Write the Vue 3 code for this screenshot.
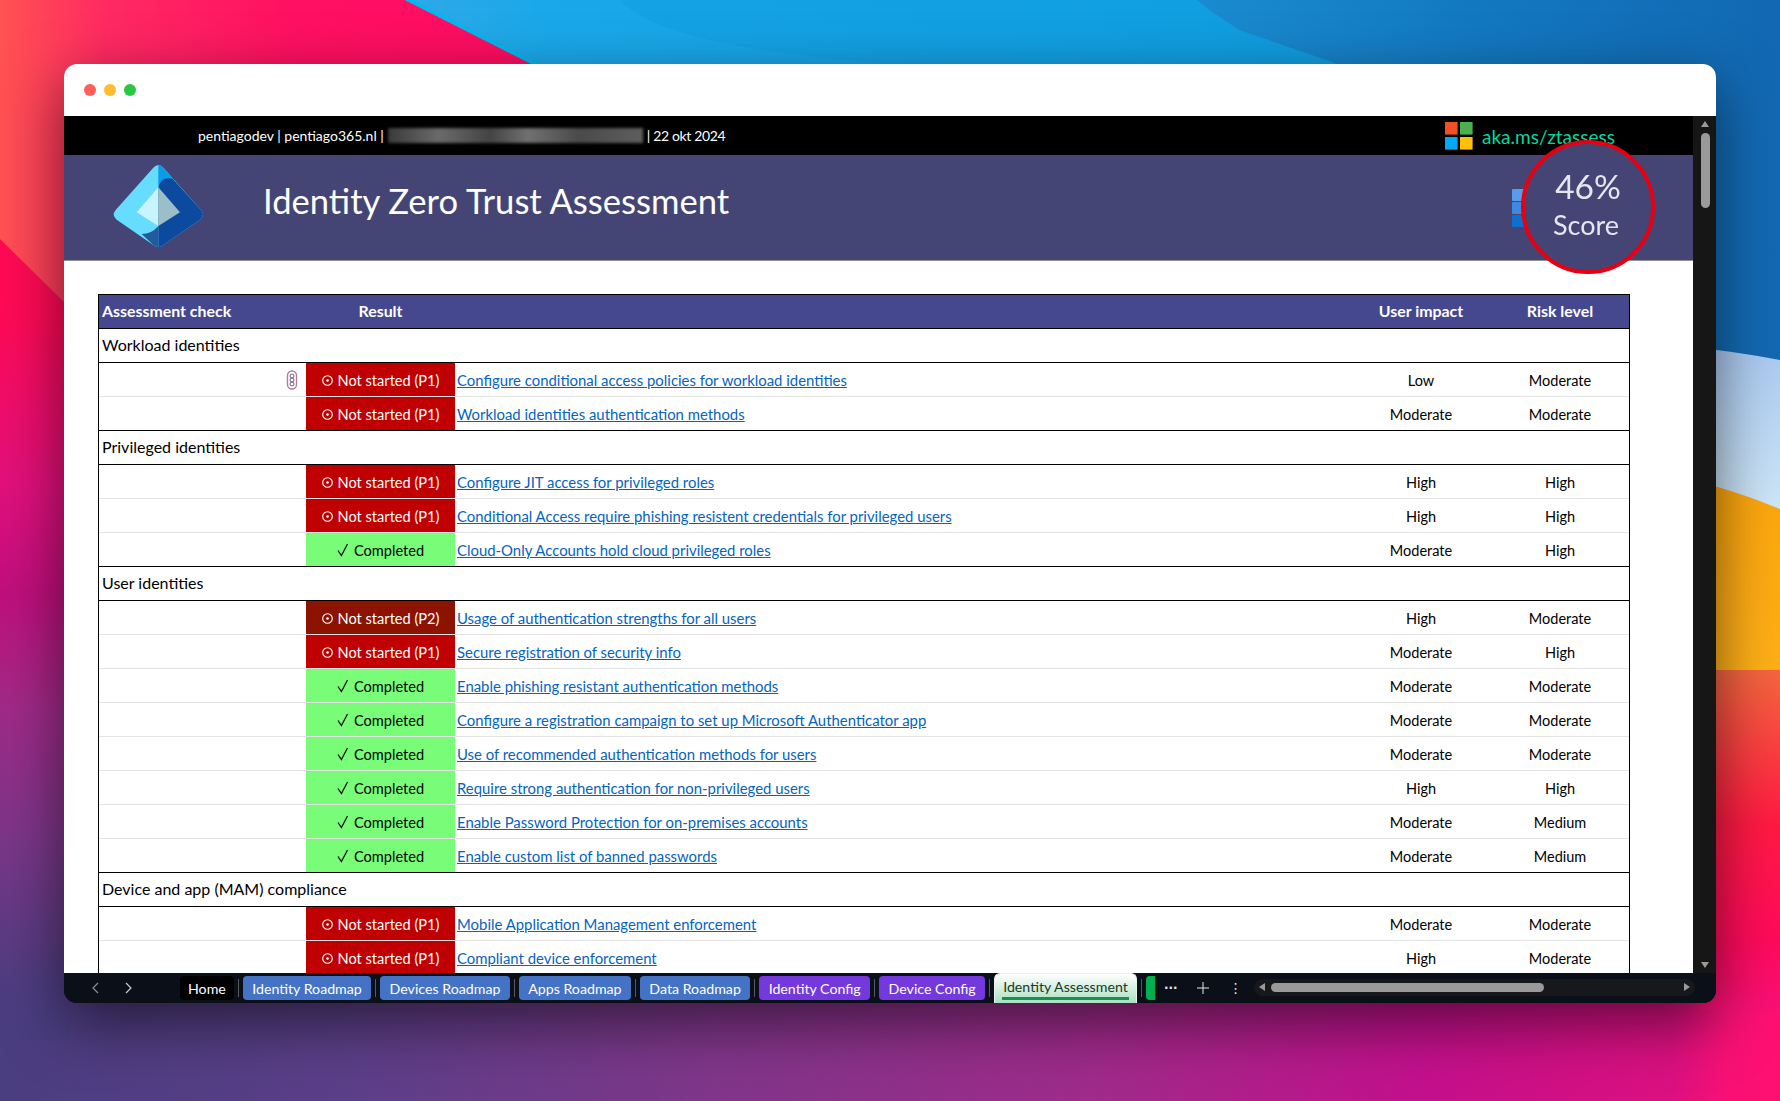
<script setup>
const P1 = { label: 'Not started (P1)', cls: 'p1' }
const P2 = { label: 'Not started (P2)', cls: 'p2' }
const OK = { label: 'Completed', cls: 'ok' }

const sections = [
  {
    name: 'Workload identities',
    rows: [
      { s: P1, link: 'Configure conditional access policies for workload identities', impact: 'Low', risk: 'Moderate', note: true },
      { s: P1, link: 'Workload identities authentication methods', impact: 'Moderate', risk: 'Moderate' },
    ],
  },
  {
    name: 'Privileged identities',
    rows: [
      { s: P1, link: 'Configure JIT access for privileged roles', impact: 'High', risk: 'High' },
      { s: P1, link: 'Conditional Access require phishing resistent credentials for privileged users', impact: 'High', risk: 'High' },
      { s: OK, link: 'Cloud-Only Accounts hold cloud privileged roles', impact: 'Moderate', risk: 'High' },
    ],
  },
  {
    name: 'User identities',
    rows: [
      { s: P2, link: 'Usage of authentication strengths for all users', impact: 'High', risk: 'Moderate' },
      { s: P1, link: 'Secure registration of security info', impact: 'Moderate', risk: 'High' },
      { s: OK, link: 'Enable phishing resistant authentication methods', impact: 'Moderate', risk: 'Moderate' },
      { s: OK, link: 'Configure a registration campaign to set up Microsoft Authenticator app', impact: 'Moderate', risk: 'Moderate' },
      { s: OK, link: 'Use of recommended authentication methods for users', impact: 'Moderate', risk: 'Moderate' },
      { s: OK, link: 'Require strong authentication for non-privileged users', impact: 'High', risk: 'High' },
      { s: OK, link: 'Enable Password Protection for on-premises accounts', impact: 'Moderate', risk: 'Medium' },
      { s: OK, link: 'Enable custom list of banned passwords', impact: 'Moderate', risk: 'Medium' },
    ],
  },
  {
    name: 'Device and app (MAM) compliance',
    rows: [
      { s: P1, link: 'Mobile Application Management enforcement', impact: 'Moderate', risk: 'Moderate' },
      { s: P1, link: 'Compliant device enforcement', impact: 'High', risk: 'Moderate' },
    ],
  },
]

const tabs = [
  { label: 'Home', cls: 'home' },
  { label: 'Identity Roadmap', cls: 'blue' },
  { label: 'Devices Roadmap', cls: 'blue' },
  { label: 'Apps Roadmap', cls: 'blue' },
  { label: 'Data Roadmap', cls: 'blue' },
  { label: 'Identity Config', cls: 'violet' },
  { label: 'Device Config', cls: 'violet' },
  { label: 'Identity Assessment', cls: 'active' },
]
</script>

<template>
  <div class="desktop">
    <svg class="wallpaper" width="1780" height="1101" viewBox="0 0 1780 1101">
      <defs>
        <linearGradient id="wpBottom" x1="0" x2="1" y1="0" y2="0">
          <stop offset="0" stop-color="#4a3d80" />
          <stop offset="0.2" stop-color="#5c3f88" />
          <stop offset="0.4" stop-color="#80368a" />
          <stop offset="0.62" stop-color="#a02a8a" />
          <stop offset="0.8" stop-color="#c4108c" />
          <stop offset="0.94" stop-color="#dc1080" />
          <stop offset="0.97" stop-color="#f81075" />
          <stop offset="1" stop-color="#ff1070" />
        </linearGradient>
        <linearGradient id="wpLeft" x1="0" x2="0" y1="0" y2="1">
          <stop offset="0" stop-color="#ff0a50" />
          <stop offset="0.3" stop-color="#ff0a55" />
          <stop offset="0.47" stop-color="#e0107c" />
          <stop offset="0.57" stop-color="#c00f7c" />
          <stop offset="0.68" stop-color="#a02a88" />
          <stop offset="0.81" stop-color="#7a3688" />
          <stop offset="0.95" stop-color="#4d3d80" />
          <stop offset="1" stop-color="#4a3d80" />
        </linearGradient>
        <linearGradient id="wpPink" gradientUnits="userSpaceOnUse" x1="0" x2="530" y1="0" y2="0">
          <stop offset="0" stop-color="#ff5252" />
          <stop offset="0.2" stop-color="#ff2a62" />
          <stop offset="0.55" stop-color="#ff1062" />
          <stop offset="1" stop-color="#ff0c60" />
        </linearGradient>
        <linearGradient id="wpBlue" x1="0" x2="1" y1="0" y2="0">
          <stop offset="0" stop-color="#30a8e8" />
          <stop offset="0.1" stop-color="#1aa8ea" />
          <stop offset="0.55" stop-color="#12a2e2" />
          <stop offset="1" stop-color="#0f90d6" />
        </linearGradient>
        <linearGradient id="wpDeep" gradientUnits="userSpaceOnUse" x1="1197" x2="1780" y1="0" y2="0">
          <stop offset="0" stop-color="#1a8bd0" />
          <stop offset="0.5" stop-color="#1278c0" />
          <stop offset="1" stop-color="#1268b2" />
        </linearGradient>
        <linearGradient id="wpSky" x1="0" x2="0" y1="0" y2="1">
          <stop offset="0" stop-color="#a8c8f0" />
          <stop offset="1" stop-color="#d0e8f8" />
        </linearGradient>
        <linearGradient id="wpOrange" x1="0" x2="0" y1="0" y2="1">
          <stop offset="0" stop-color="#fca40c" />
          <stop offset="1" stop-color="#ffb018" />
        </linearGradient>
        <linearGradient id="wpRed" x1="0" x2="0" y1="0" y2="1">
          <stop offset="0" stop-color="#f4663e" />
          <stop offset="0.45" stop-color="#ff1a42" />
          <stop offset="0.8" stop-color="#ff0a5c" />
          <stop offset="1" stop-color="#f81075" />
        </linearGradient>
      </defs>
      <rect width="1780" height="1101" fill="url(#wpBottom)" />
      <rect width="70" height="1040" fill="url(#wpLeft)" />
      <rect x="405" width="1375" height="360" fill="url(#wpBlue)" />
      <path d="M619 0 C650 30 720 50 886 64 L1335 64 L1197 0 Z" fill="#0f9cdf" opacity="0.35" />
      <path d="M1197 0 C1210 12 1225 20 1239 30 L1335 63 L1500 360 L1780 360 L1780 0 Z" fill="url(#wpDeep)" />
      <path d="M405 0 L0 0 L0 239 L64 302 L1000 302 Z" fill="url(#wpPink)" />
      <path d="M405 0 L413 0 L538 63 L530 63 Z" fill="#00b8f0" />
      <path d="M1500 340 C1600 335 1700 345 1780 360 L1780 520 L1500 520 Z" fill="url(#wpSky)" />
      <path d="M1500 450 C1600 455 1700 476 1780 509 L1780 680 L1500 680 Z" fill="url(#wpOrange)" />
      <rect x="1700" y="670" width="80" height="340" fill="url(#wpRed)" />
    </svg>

    <div class="window">
      <div class="titlebar">
        <span class="dot dot-red"></span>
        <span class="dot dot-amber"></span>
        <span class="dot dot-green"></span>
      </div>

      <div class="workspace">
        <div class="sheet">
          <div class="tenant-bar">
            <span>pentiagodev | pentiago365.nl |</span>
            <span class="redacted"></span>
            <span class="date">| 22 okt 2024</span>
            <svg class="ms-logo" width="28" height="28" viewBox="0 0 28 28">
              <rect width="12.6" height="12.6" fill="#f25022" />
              <rect x="15" width="12.6" height="12.6" fill="#4caf50" />
              <rect y="15" width="12.6" height="12.6" fill="#03a9f4" />
              <rect x="15" y="15" width="12.6" height="12.6" fill="#ffc107" />
            </svg>
            <span class="aka">aka.ms/ztassess</span>
          </div>

          <div class="banner">
            <svg class="entra-logo" width="120" height="95" viewBox="0 0 360 285">
              <path d="M160 23 Q175 7 190 23 L303 150 Q316 166 300 179 L190 255 Q175 267 160 255 L50 179 Q34 166 47 150 Z" fill="#66dcff" />
              <path d="M175 15 Q183 14 190 23 L222 60 L175 90 Z" fill="#0a9be8" />
              <path d="M175 85 Q180 50 218 56 L303 150 Q316 166 300 179 L190 255 Q182 261 175 262 Z" fill="#0b4a9e" />
              <path d="M175 198 Q155 222 125 222 L160 255 Q168 261 175 262 Z" fill="#235a9a" />
              <path d="M175 82 L110 157 L175 198 Z" fill="#c8f4ff" />
              <path d="M175 82 L240 157 L175 198 Z" fill="#9bbfc8" />
            </svg>
            <h1 class="title">Identity Zero Trust Assessment</h1>
            <div class="score-bars"><i></i><i></i><i></i></div>
          </div>

          <div class="table-wrap">
            <div class="table">
              <div class="row head">
                <div class="cell name">Assessment check</div>
                <div class="cell center">Result</div>
                <div class="cell"></div>
                <div class="cell center">User impact</div>
                <div class="cell center">Risk level</div>
              </div>
              <div v-for="section in sections" :key="section.name" class="section">
                <div class="section-name">{{ section.name }}</div>
                <div v-for="row in section.rows" :key="row.link" class="row item">
                  <div class="cell note-cell">
                    <svg v-if="row.note" class="note" width="12" height="20" viewBox="0 0 12 20">
                      <rect x="1.5" y="1" width="9" height="18" rx="4.5" fill="#fff" stroke="#b9789e" stroke-width="1.4" />
                      <circle cx="6" cy="6" r="2" fill="none" stroke="#6a5a8a" stroke-width="1" />
                      <circle cx="6" cy="10" r="2" fill="none" stroke="#6a5a8a" stroke-width="1" />
                      <circle cx="6" cy="14" r="2" fill="none" stroke="#6a5a8a" stroke-width="1" />
                    </svg>
                  </div>
                  <div class="cell status" :class="row.s.cls">
                    <svg v-if="row.s.cls === 'ok'" class="status-icon" width="12" height="14" viewBox="0 0 12 14">
                      <path d="M1 7.5 L4.4 12.5 L10.5 1" fill="none" stroke="#000" stroke-width="1.2" />
                    </svg>
                    <svg v-else class="status-icon" width="11" height="11" viewBox="0 0 11 11">
                      <circle cx="5.5" cy="5.5" r="4.8" fill="none" stroke="#fff" stroke-width="1.1" />
                      <circle cx="5.5" cy="5.5" r="1.3" fill="#fff" />
                    </svg>
                    {{ row.s.label }}
                  </div>
                  <div class="cell link-cell"><a class="link">{{ row.link }}</a></div>
                  <div class="cell center">{{ row.impact }}</div>
                  <div class="cell center">{{ row.risk }}</div>
                </div>
              </div>
            </div>
          </div>

          <div class="score">
            <span class="score-value">46%</span>
            <span class="score-label">Score</span>
          </div>
        </div>

        <div class="vscroll">
          <span class="arrow-up"></span>
          <span class="vthumb"></span>
          <span class="arrow-down"></span>
        </div>
      </div>

      <div class="tabbar">
        <svg class="nav" width="56" height="14" viewBox="0 0 56 14">
          <path d="M10 2 L5 7 L10 12" fill="none" stroke="#8b8f96" stroke-width="1.2" />
          <path d="M38 2 L43 7 L38 12" fill="none" stroke="#c8ccd0" stroke-width="1.2" />
        </svg>
        <template v-for="(tab, i) in tabs" :key="tab.label">
          <i v-if="i" class="tab-sep"></i>
          <div class="tab" :class="tab.cls">{{ tab.label }}</div>
        </template>
        <i class="tab-sep"></i>
        <span class="green-tab"></span>
        <span class="more">···</span>
        <svg class="plus" width="14" height="14" viewBox="0 0 14 14">
          <path d="M7 1 V13 M1 7 H13" stroke="#e8e8e8" stroke-width="1" fill="none" />
        </svg>
        <span class="kebab">⋮</span>
        <div class="hscroll">
          <span class="arrow-left"></span>
          <span class="hthumb"></span>
          <span class="arrow-right"></span>
        </div>
      </div>
    </div>
  </div>
</template>

<style>
html,
body {
  margin: 0;
  overflow: hidden;
}
</style>

<style scoped>
.desktop {
  position: relative;
  width: 1780px;
  height: 1101px;
  padding: 64px 64px 0;
  box-sizing: border-box;
  overflow: hidden;
  font-family: Lato, "Liberation Sans", sans-serif;
  font-size: 14.5px;
  color: #000;
}

.wallpaper {
  position: absolute;
  left: 0;
  top: 0;
}

.window {
  position: relative;
  height: 939px;
  display: flex;
  flex-direction: column;
  border-radius: 13px;
  overflow: hidden;
  background: #0a0f18;
  box-shadow: 0 20px 60px rgba(0, 0, 0, 0.55);
}

.titlebar {
  height: 52px;
  flex: none;
  display: flex;
  align-items: center;
  gap: 8px;
  padding-left: 20px;
  background: #fff;
}

.dot {
  width: 12px;
  height: 12px;
  border-radius: 50%;
}

.dot-red {
  background: #ff5f57;
}

.dot-amber {
  background: #febc2e;
}

.dot-green {
  background: #28c840;
}

.workspace {
  flex: 1;
  min-height: 0;
  display: flex;
}

.sheet {
  position: relative;
  flex: 1;
  min-width: 0;
  display: flex;
  flex-direction: column;
  background: #fff;
}

.tenant-bar {
  height: 39px;
  flex: none;
  display: flex;
  align-items: center;
  padding-left: 134px;
  background: #000;
  color: #fff;
  font-size: 14px;
}

.redacted {
  width: 255px;
  height: 15px;
  margin: 0 3px 0 4px;
  background: linear-gradient(90deg, #3a3a3a, #6a6a6a 20%, #444 40%, #707070 55%, #4a4a4a 75%, #5e5e5e);
  filter: blur(1.5px);
}

.date {
  margin-left: 1px;
  letter-spacing: -0.35px;
}

.ms-logo {
  margin-left: auto;
}

.aka {
  width: 211px;
  margin-left: 9px;
  padding-top: 1px;
  color: #00d8a0;
  font-size: 19px;
  box-sizing: border-box;
}

.banner {
  height: 106px;
  flex: none;
  display: flex;
  align-items: center;
  padding-left: 36px;
  box-sizing: border-box;
  border-bottom: 1px solid #8f9098;
  background: #444575;
}

.title {
  margin: 0 0 14px 43px;
  color: #fff;
  font-size: 34.6px;
  font-weight: 400;
}

.score-bars {
  display: flex;
  flex-direction: column;
  gap: 1px;
  margin-left: auto;
  margin-right: 163px;
}

.score-bars i {
  width: 18px;
  height: 12px;
  border-radius: 1px;
  background: #5a9cec;
}

.score-bars i:nth-child(2) {
  background: #3d88e0;
}

.score-bars i:nth-child(3) {
  background: #0f6fd0;
}

.table-wrap {
  flex: 1;
  min-height: 0;
  overflow: hidden;
  padding: 33px 0 0 34px;
}

.table {
  width: 1532px;
  border-left: 1px solid #000;
  border-right: 1px solid #000;
  box-sizing: border-box;
}

.row {
  display: grid;
  grid-template-columns: 207px 149px 896px 140px 138px;
  height: 34px;
  box-sizing: border-box;
}

.head {
  padding-bottom: 2px;
  border-top: 1px solid #000;
  background: #45488f;
  color: #fff;
  font-size: 15.9px;
  font-weight: 700;
}

.cell {
  display: flex;
  align-items: center;
  min-width: 0;
}

.name {
  padding-left: 3px;
}

.center {
  justify-content: center;
}

.section-name {
  height: 34px;
  display: flex;
  align-items: center;
  padding: 0 0 2px 3px;
  box-sizing: border-box;
  border-top: 1px solid #000;
  font-size: 16px;
}

.item {
  border-top: 1px solid #e3e3e3;
}

.item .center,
.item .status {
  padding-top: 1px;
}

.section-name + .item {
  border-top-color: #000;
}

.note-cell {
  justify-content: flex-end;
  padding-right: 8px;
}

.status {
  justify-content: center;
  gap: 5px;
  font-size: 14.6px;
}

.p1 {
  background: #c00000;
  color: #fff;
}

.p2 {
  background: #8b1300;
  color: #fff;
}

.ok {
  background: #79fd79;
}

.link-cell {
  padding-left: 2px;
  font-size: 14.9px;
}

.link {
  color: #0563c1;
  text-decoration: underline;
}

.score {
  position: absolute;
  left: 1457px;
  top: 24px;
  width: 134px;
  height: 134px;
  box-sizing: border-box;
  display: flex;
  flex-direction: column;
  align-items: center;
  border: 4px solid #e60012;
  border-radius: 50%;
  background: #444575;
  color: #e6e6ee;
}

.score-value {
  margin-top: 20px;
  font-size: 33.5px;
  line-height: 44px;
  filter: blur(0.4px);
}

.score-label {
  margin-right: 4px;
  font-size: 27px;
  line-height: 33px;
  filter: blur(0.4px);
}

.vscroll {
  position: relative;
  width: 23px;
  flex: none;
  background: #161616;
}

.vthumb {
  position: absolute;
  left: 8px;
  top: 17px;
  width: 9px;
  height: 75px;
  border-radius: 5px;
  background: #9a9a9a;
}

.arrow-up,
.arrow-down {
  position: absolute;
  left: 8px;
  width: 0;
  height: 0;
  border-left: 4.5px solid transparent;
  border-right: 4.5px solid transparent;
}

.arrow-up {
  top: 5px;
  border-bottom: 6px solid #9a9a9a;
}

.arrow-down {
  bottom: 5px;
  border-top: 6px solid #9a9a9a;
}

.tabbar {
  height: 30px;
  flex: none;
  display: flex;
  align-items: center;
  gap: 4px;
  padding-left: 24px;
  background: #0a0f18;
  font-size: 14.2px;
}

.nav {
  margin-right: 32px;
}

.tab {
  height: 24px;
  display: flex;
  align-items: center;
  padding: 0 9.4px;
  border-radius: 4px;
  color: #fff;
}

.home {
  padding: 0 8px;
  background: #000;
}

.blue {
  background: #4472c4;
}

.violet {
  background: #7339dc;
}

.active {
  position: relative;
  height: 30px;
  padding: 0 8px 5px;
  box-sizing: border-box;
  border: 1px solid #e8f3ec;
  border-bottom: 0;
  border-radius: 6px 6px 0 0;
  background: linear-gradient(#ffffff, #a8e0c0);
  color: #1a3a28;
}

.active::after {
  content: "";
  position: absolute;
  left: 7px;
  right: 7px;
  bottom: 3px;
  height: 3px;
  background: #1a9050;
}

.tab-sep {
  width: 1px;
  height: 18px;
  background: #555a62;
}

.green-tab {
  width: 9px;
  height: 24px;
  border-radius: 4px 0 0 4px;
  background: #00b050;
}

.more,
.kebab {
  color: #e8e8e8;
  text-align: center;
  font-family: "DejaVu Sans", sans-serif;
}

.more {
  width: 14px;
  margin-left: 5px;
  font-size: 12px;
  font-weight: 700;
}

.plus {
  margin-left: 14px;
}

.kebab {
  width: 10px;
  margin-left: 15px;
  font-size: 14px;
}

.hscroll {
  position: relative;
  width: 441px;
  height: 17px;
  margin-left: 11px;
  margin-bottom: 2px;
  border-radius: 9px;
  background: #16181c;
}

.hthumb {
  position: absolute;
  left: 17px;
  top: 4px;
  width: 273px;
  height: 9px;
  border-radius: 5px;
  background: #9a9a9a;
}

.arrow-left,
.arrow-right {
  position: absolute;
  top: 4px;
  width: 0;
  height: 0;
  border-top: 4.5px solid transparent;
  border-bottom: 4.5px solid transparent;
}

.arrow-left {
  left: 5px;
  border-right: 6px solid #9a9a9a;
}

.arrow-right {
  right: 5px;
  border-left: 6px solid #9a9a9a;
}
</style>
